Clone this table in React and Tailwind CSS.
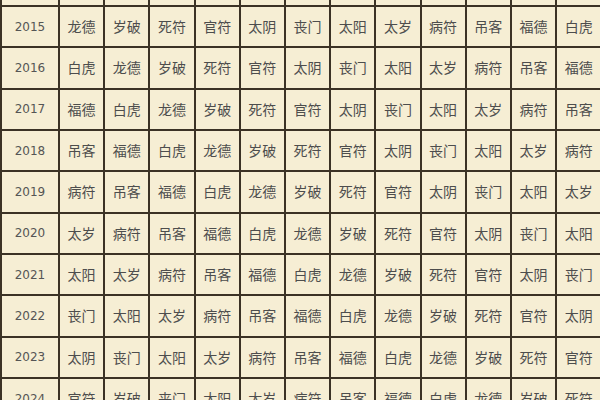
import React from "react";

const rows = [
  ["2015", "龙德 岁破 死符 官符 太阴 丧门 太阳 太岁 病符 吊客 福德 白虎"],
  ["2016", "白虎 龙德 岁破 死符 官符 太阴 丧门 太阳 太岁 病符 吊客 福德"],
  ["2017", "福德 白虎 龙德 岁破 死符 官符 太阴 丧门 太阳 太岁 病符 吊客"],
  ["2018", "吊客 福德 白虎 龙德 岁破 死符 官符 太阴 丧门 太阳 太岁 病符"],
  ["2019", "病符 吊客 福德 白虎 龙德 岁破 死符 官符 太阴 丧门 太阳 太岁"],
  ["2020", "太岁 病符 吊客 福德 白虎 龙德 岁破 死符 官符 太阴 丧门 太阳"],
  ["2021", "太阳 太岁 病符 吊客 福德 白虎 龙德 岁破 死符 官符 太阴 丧门"],
  ["2022", "丧门 太阳 太岁 病符 吊客 福德 白虎 龙德 岁破 死符 官符 太阴"],
  ["2023", "太阴 丧门 太阳 太岁 病符 吊客 福德 白虎 龙德 岁破 死符 官符"],
  ["2024", "官符 岁破 丧门 太阳 太岁 病符 吊客 福德 白虎 龙德 岁破 死符"],
];

export default function App() {
  return (
    <div className="w-[600px] h-[400px] overflow-hidden bg-[#f6eed4]">
      <div className="grid grid-cols-[56px_repeat(12,43.2px)] grid-rows-[5px_repeat(10,39.33px)] gap-[2px] pl-[2px] bg-[#3b3225] w-[620px]">
        {Array.from({ length: 13 }).map((_, i) => (
          <div key={"top" + i} className="bg-[#f6eed4]" />
        ))}
        {rows.map(([year, cells]) => (
          <React.Fragment key={year}>
            <div className="bg-[#f6eed4] flex items-center justify-center text-[12px] text-[#555] [font-family:'DejaVu_Sans',sans-serif]">
              {year}
            </div>
            {cells.split(" ").map((c, j) => (
              <div
                key={j}
                className="bg-[#f6eed4] flex items-center justify-center text-[14px] text-[#4d4d4d] [font-family:'Noto_Sans_CJK_SC',sans-serif] whitespace-nowrap"
              >
                {c}
              </div>
            ))}
          </React.Fragment>
        ))}
      </div>
    </div>
  );
}
